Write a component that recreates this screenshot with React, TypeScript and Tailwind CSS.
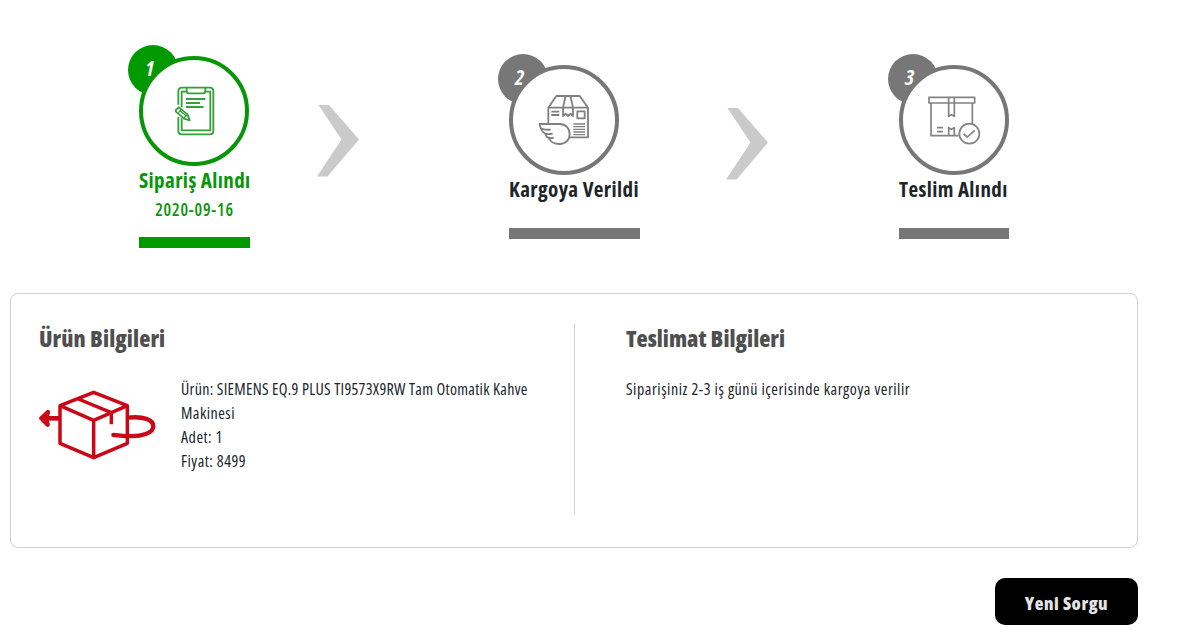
import type { ReactNode } from "react";

type StepProps = {
  no: number;
  label: string;
  date?: string;
  active?: boolean;
  className?: string;
  children: ReactNode;
};

function Step({ no, label, date, active, className, children }: StepProps) {
  return (
    <div className={`relative shrink-0 ${className}`}>
      <div
        className={`absolute -left-[11px] -top-[11px] size-[50px] rounded-full pl-[17px] pt-[11px] text-[21px] leading-6 font-bold italic text-white ${
          active ? "bg-[#009a00]" : "bg-[#777777]"
        }`}
      >
        {no}
      </div>
      <div
        className={`relative size-[110px] rounded-full border-4 bg-white ${
          active ? "border-[#079607]" : "border-[#777777]"
        }`}
      >
        {children}
      </div>
      <h3
        className={`mt-0.5 h-6 whitespace-nowrap text-[21px] leading-6 font-bold tracking-[0.4px] ${
          active ? "text-[#079607]" : "text-[#212529]"
        }`}
      >
        {label}
      </h3>
      {date && (
        <p className="mt-1.5 text-center text-[17px] leading-6 font-semibold tracking-[0.8px] text-[#079607]">
          {date}
        </p>
      )}
      <div
        className={`h-[11px] w-full ${
          active ? "mt-[15px] bg-[#009a00]" : "mt-[27px] bg-[#777777]"
        }`}
      />
    </div>
  );
}

function Chevron({ className }: { className?: string }) {
  return (
    <svg
      className={`h-[72px] w-[42px] shrink-0 ${className}`}
      viewBox="0 0 42 72"
      fill="#cacaca"
    >
      <path d="M1.5 0H12L42 34.5 10.500 71.500H0L24.500 34.500Z" />
    </svg>
  );
}

function OrderIcon() {
  return (
    <svg
      className="absolute -inset-1 size-[110px]"
      viewBox="57 63 330 330"
      fill="none"
      stroke="#35a03b"
      strokeWidth="5.500"
      strokeLinejoin="round"
    >
      <path d="M175 209V169Q175 158 186 158H269Q280 158 280 169V287Q280 298 269 298H186Q175 298 175 287V246" />
      <path d="M185 216V170H200M256 170H271V286H185V250" />
      <path d="M200 158V167Q200 175 207 175H249Q256 175 256 167V158" />
      <path d="M198 192H256M198 204H240M198 216H251" />
      <path d="M168 224L177 217 203 239 209 256 192 251 167 229Z" />
      <path d="M175 233L184 223M191 249L203 239M180 227L200 244" strokeWidth="4" />
    </svg>
  );
}

function ShippingIcon() {
  return (
    <svg
      className="absolute -inset-1 size-[110px]"
      viewBox="57 60 330 330"
      fill="none"
      stroke="#808080"
      strokeWidth="5.500"
      strokeLinejoin="round"
    >
      <path d="M175 235V188L199 153H269L294 188V277H236" />
      <path d="M175 188H294M227 153L219 188V213L227 206 234 213 242 206 249 213V188L241 153" />
      <path d="M184 200H208M184 210H208" />
      <path d="M262 199H284V220H262Z" />
      <path d="M250 237H285M250 245H285M250 253H285M250 261H285M250 269H285" strokeWidth="4" />
      <path
        d="M149 237H209C227 237 239 250 239 267S227 297 208 297C192 297 180 289 177 279Q168 277 167 267Q151 258 149 237Z"
        fill="#fff"
      />
      <path d="M153 250Q160 255 182 254M164 266Q174 269 188 266M175 278Q183 281 191 278" />
    </svg>
  );
}

function DeliveredIcon() {
  return (
    <svg
      className="absolute -inset-1 size-[110px]"
      viewBox="57 60 330 330"
      fill="none"
      stroke="#828282"
      strokeWidth="5"
      strokeLinejoin="round"
    >
      <path d="M147 157H284V174H147ZM153 174V272H236M277 174V236" />
      <path d="M206 157V214L214 209 223 214V157M206 272V248L214 253 223 248V272" />
      <path d="M171 248H189M171 260H189" />
      <circle cx="268" cy="266" r="30" fill="#fff" />
      <path d="M251 267L262 276 284 256" strokeWidth="5" />
    </svg>
  );
}

function ParcelIcon() {
  return (
    <svg
      className="h-[70px] w-[117px]"
      viewBox="117 315 351 210"
      fill="none"
      stroke="#ca0716"
      strokeWidth="10.500"
      strokeLinejoin="round"
    >
      <path d="M180 362L281 322 382 362V475L281 518 180 475ZM180 362L281 406 382 362M281 406V518" />
      <path d="M235 342L334 383V418" />
      <path d="M180 400H131" strokeWidth="14" />
      <path
        d="M144 381L124 400 143 419 138 400Z"
        fill="#ca0716"
        strokeWidth="13"
        strokeLinecap="round"
      />
      <path
        d="M384 398C430 393 460 404 460 424C460 445 425 455 384 453C367 454 350 450 340 450"
        strokeWidth="13"
        strokeLinecap="round"
      />
    </svg>
  );
}

export default function App() {
  return (
    <div className="h-[641px] overflow-hidden bg-white pt-14 font-['Open_Sans',sans-serif] font-stretch-condensed text-[#212529]">
      <div className="flex h-[237px] items-start pl-[139px]">
        <Step no={1} label="Sipariş Alındı" date="2020-09-16" active className="w-[111px]">
          <OrderIcon />
        </Step>
        <Chevron className="ml-[67px] mt-[49px]" />
        <Step no={2} label="Kargoya Verildi" className="ml-[150px] mt-[9px] w-[131px]">
          <ShippingIcon />
        </Step>
        <Chevron className="ml-[86px] mt-[52px]" />
        <Step no={3} label="Teslim Alındı" className="ml-[131px] mt-[9px] w-[110px]">
          <DeliveredIcon />
        </Step>
      </div>

      <div className="ml-2.5 flex h-[255px] w-[1128px] rounded-lg border border-[#d2d2d2] pl-7 pt-[30px]">
        <div className="h-[190px] w-[536px] border-r border-[#d2d2d2]">
          <h2 className="text-[23px] leading-7 font-extrabold tracking-[0.1px] text-[#4f4f4f]">
            Ürün Bilgileri
          </h2>
          <div className="mt-[25px] flex">
            <div className="mt-[13px]">
              <ParcelIcon />
            </div>
            <div className="ml-[25px] whitespace-nowrap text-base leading-6 tracking-[0.5px]">
              <p className="tracking-[0.3px]">
                Ürün: SIEMENS EQ.9 PLUS TI9573X9RW Tam Otomatik Kahve
              </p>
              <p>Makinesi</p>
              <p>Adet: 1</p>
              <p>Fiyat: 8499</p>
            </div>
          </div>
        </div>
        <div className="ml-[51px]">
          <h2 className="text-[23px] leading-7 font-extrabold text-[#4f4f4f]">
            Teslimat Bilgileri
          </h2>
          <p className="mt-[25px] whitespace-nowrap text-base leading-6 tracking-[0.55px]">
            Siparişiniz 2-3 iş günü içerisinde kargoya verilir
          </p>
        </div>
      </div>

      <button className="ml-[995px] mt-[30px] block h-[47px] w-[143px] rounded-[10px] bg-black pt-0.5 text-lg font-extrabold tracking-[0.5px] text-[#e4e4e4]">
        Yeni Sorgu
      </button>
    </div>
  );
}
